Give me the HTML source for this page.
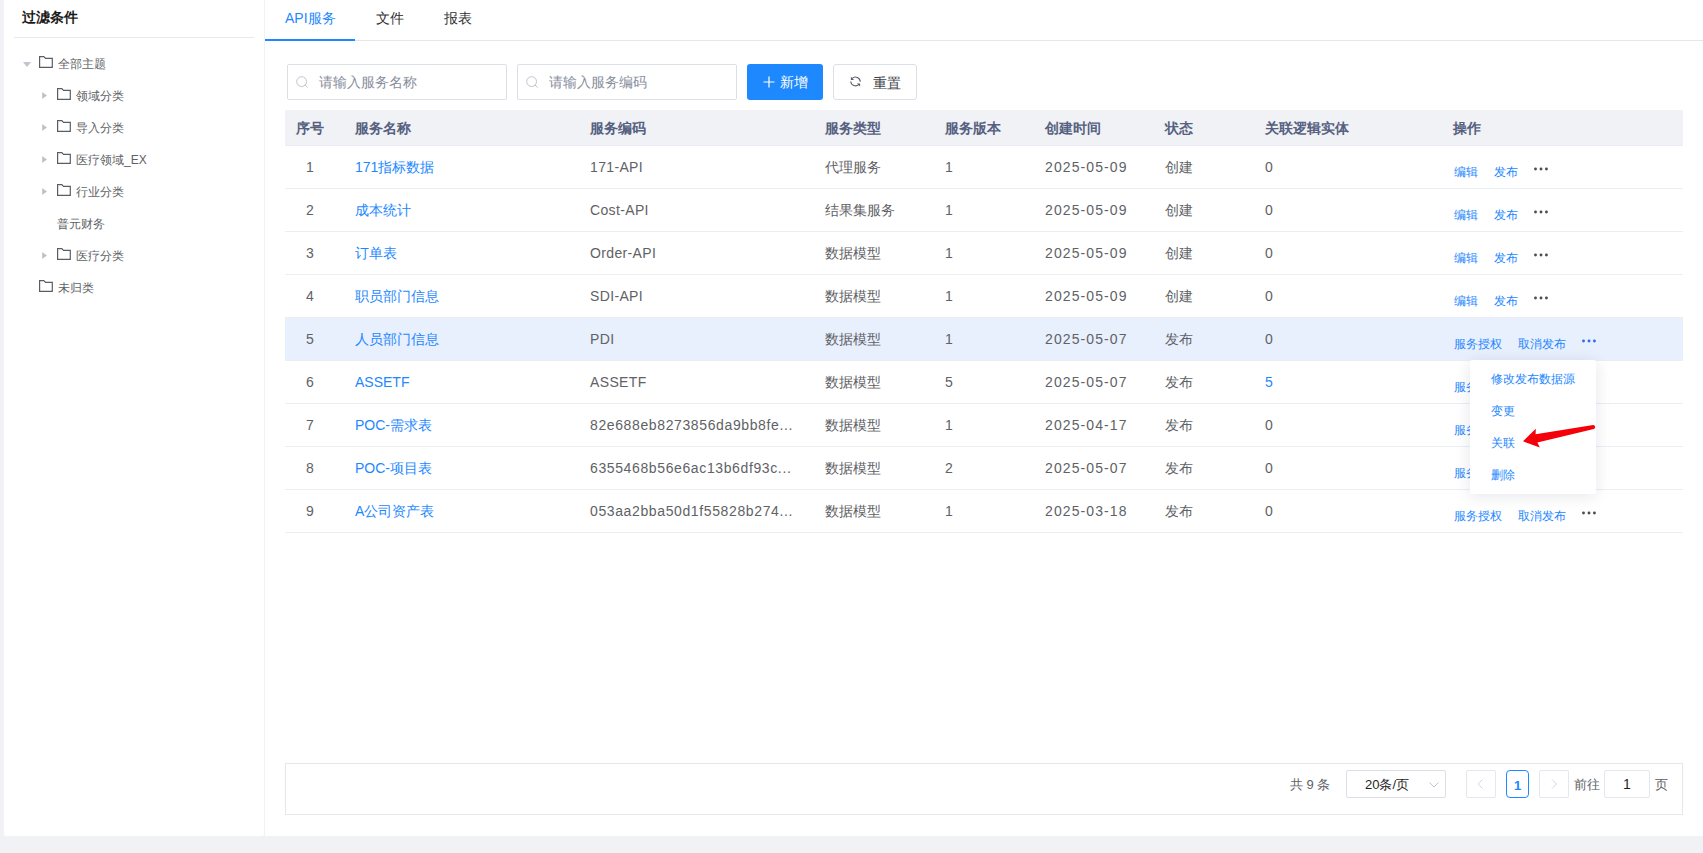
<!DOCTYPE html>
<html><head><meta charset="utf-8">
<style>
*{box-sizing:border-box;margin:0;padding:0}
html,body{width:1703px;height:853px;overflow:hidden;background:#f0f2f5;font-family:"Liberation Sans",sans-serif;}
#left{position:absolute;left:4px;top:0;width:260px;height:836px;background:#fff;border-radius:0 0 2px 2px}
#right{position:absolute;left:265px;top:0;width:1438px;height:836px;background:#fff}
.t{position:absolute;white-space:nowrap;line-height:1}
.ttl{left:18px;top:10px;font-size:14px;font-weight:bold;color:#1a1a1a;line-height:14px}
.sep{position:absolute;left:10px;top:37px;width:240px;height:1px;background:#e6e9f0}
.nt{position:absolute;font-size:12px;line-height:14px;color:#606266;white-space:nowrap}
.fold{position:absolute}
.arr-d{position:absolute;width:0;height:0;border-left:4px solid transparent;border-right:4px solid transparent;border-top:5px solid #bfc4cf}
.arr-r{position:absolute;width:0;height:0;border-top:3.5px solid transparent;border-bottom:3.5px solid transparent;border-left:5px solid #bfc4cf}
.tabs{position:absolute;left:0;top:0;width:1438px;height:41px;border-bottom:1px solid #e4e7ed}
.tab{position:absolute;top:11px;font-size:14px;line-height:14px;color:#303133;white-space:nowrap}
.tab.act{color:#1e88ff}
.tabline{position:absolute;left:0;top:39px;width:90px;height:2px;background:#1e88ff}
.inp{position:absolute;top:64px;width:220px;height:36px;border:1px solid #dcdfe6;border-radius:2px;background:#fff}
.inp .ph{position:absolute;left:30.5px;top:10px;font-size:14px;line-height:14px;color:#878e9c;white-space:nowrap}
.inp svg{position:absolute;left:8px;top:11px}
.btn{position:absolute;top:64px;height:36px;border-radius:3px;font-size:14px;white-space:nowrap}
.btn .bt{position:absolute;top:11px;line-height:14px}
.btn-p{left:482px;width:76px;background:#1e88ff;color:#fff}
.btn-d{left:568px;width:84px;border:1px solid #dcdfe6;background:#fff;color:#404348}
.thead{position:absolute;left:20px;top:110px;width:1398px;height:36px;background:#f0f2f5;border-bottom:1px solid #e8ebf3}
.th{position:absolute;top:11px;font-size:14px;line-height:14px;color:#566080;font-weight:bold;white-space:nowrap}
.row{position:absolute;left:20px;width:1398px;height:43px;border-bottom:1px solid #ebeef5}
.row.hov{background:#e8effd}
.td{position:absolute;top:14px;font-size:14px;line-height:14px;color:#606266;white-space:nowrap}
.td.lk{color:#1e88ff}
.op{position:absolute;top:20px;font-size:12px;line-height:12px;color:#1e88ff;white-space:nowrap}
.dots{position:absolute;top:21px}
.dots i{position:absolute;top:0;width:3px;height:3px;border-radius:50%;background:#3a3a3a}
.dots.b i{background:#1e6bff}
.dd{position:absolute;left:1205px;top:360px;width:126px;height:134px;background:#fff;border-radius:2px;box-shadow:0 2px 16px rgba(20,30,60,0.11)}
.dd .it{position:absolute;left:21px;font-size:12px;line-height:12px;color:#1e88ff;white-space:nowrap}
.pager{position:absolute;left:20px;top:763px;width:1398px;height:52px;border:1px solid #e4e7ed}
.pg{position:absolute;font-size:13px;line-height:13px;white-space:nowrap}
.pbox{position:absolute;top:6px;height:28px;border:1px solid #e4e7ed;border-radius:2px;background:#fff}
.pbox.cur{border-color:#1e88ff;border-radius:4px}

</style></head><body>
<div id="left">
<div class="t ttl">过滤条件</div>
<div class="sep"></div>
<div class="arr-d" style="left:19px;top:62px"></div>
<svg class="fold" style="left:35px;top:56px" width="15" height="13" viewBox="0 0 15 13"><path d="M0.6 0.6H4.8L6.5 2.4H13.3V11.3H0.6Z" fill="none" stroke="#585c64" stroke-width="1.2" stroke-linejoin="miter"/></svg>
<div class="nt" style="left:54px;top:57px">全部主题</div>
<svg class="fold" style="left:38px;top:92px" width="6" height="8" viewBox="0 0 6 8"><path d="M0.2 0L5 3.5L0.2 7Z" fill="#bcc1cc"/></svg>
<svg class="fold" style="left:53px;top:88px" width="15" height="13" viewBox="0 0 15 13"><path d="M0.6 0.6H4.8L6.5 2.4H13.3V11.3H0.6Z" fill="none" stroke="#585c64" stroke-width="1.2" stroke-linejoin="miter"/></svg>
<div class="nt" style="left:72px;top:89px">领域分类</div>
<svg class="fold" style="left:38px;top:124px" width="6" height="8" viewBox="0 0 6 8"><path d="M0.2 0L5 3.5L0.2 7Z" fill="#bcc1cc"/></svg>
<svg class="fold" style="left:53px;top:120px" width="15" height="13" viewBox="0 0 15 13"><path d="M0.6 0.6H4.8L6.5 2.4H13.3V11.3H0.6Z" fill="none" stroke="#585c64" stroke-width="1.2" stroke-linejoin="miter"/></svg>
<div class="nt" style="left:72px;top:121px">导入分类</div>
<svg class="fold" style="left:38px;top:156px" width="6" height="8" viewBox="0 0 6 8"><path d="M0.2 0L5 3.5L0.2 7Z" fill="#bcc1cc"/></svg>
<svg class="fold" style="left:53px;top:152px" width="15" height="13" viewBox="0 0 15 13"><path d="M0.6 0.6H4.8L6.5 2.4H13.3V11.3H0.6Z" fill="none" stroke="#585c64" stroke-width="1.2" stroke-linejoin="miter"/></svg>
<div class="nt" style="left:72px;top:153px">医疗领域_EX</div>
<svg class="fold" style="left:38px;top:188px" width="6" height="8" viewBox="0 0 6 8"><path d="M0.2 0L5 3.5L0.2 7Z" fill="#bcc1cc"/></svg>
<svg class="fold" style="left:53px;top:184px" width="15" height="13" viewBox="0 0 15 13"><path d="M0.6 0.6H4.8L6.5 2.4H13.3V11.3H0.6Z" fill="none" stroke="#585c64" stroke-width="1.2" stroke-linejoin="miter"/></svg>
<div class="nt" style="left:72px;top:185px">行业分类</div>
<div class="nt" style="left:53px;top:217px">普元财务</div>
<svg class="fold" style="left:38px;top:252px" width="6" height="8" viewBox="0 0 6 8"><path d="M0.2 0L5 3.5L0.2 7Z" fill="#bcc1cc"/></svg>
<svg class="fold" style="left:53px;top:248px" width="15" height="13" viewBox="0 0 15 13"><path d="M0.6 0.6H4.8L6.5 2.4H13.3V11.3H0.6Z" fill="none" stroke="#585c64" stroke-width="1.2" stroke-linejoin="miter"/></svg>
<div class="nt" style="left:72px;top:249px">医疗分类</div>
<svg class="fold" style="left:35px;top:280px" width="15" height="13" viewBox="0 0 15 13"><path d="M0.6 0.6H4.8L6.5 2.4H13.3V11.3H0.6Z" fill="none" stroke="#585c64" stroke-width="1.2" stroke-linejoin="miter"/></svg>
<div class="nt" style="left:54px;top:281px">未归类</div>
</div>
<div id="right">
<div class="tabs">
    <div class="tab act" style="left:20px">API服务</div>
    <div class="tab" style="left:111px">文件</div>
    <div class="tab" style="left:179px">报表</div>
    <div class="tabline"></div>
  </div>
<div class="inp" style="left:22px"><svg width="13" height="13" viewBox="0 0 13 13"><circle cx="5.6" cy="5.6" r="4.9" fill="none" stroke="#c0c4cc" stroke-width="1"/><path d="M9.2 9.2L11.6 11.6" stroke="#c0c4cc" stroke-width="1"/></svg><div class="ph">请输入服务名称</div></div>
<div class="inp" style="left:252px"><svg width="13" height="13" viewBox="0 0 13 13"><circle cx="5.6" cy="5.6" r="4.9" fill="none" stroke="#c0c4cc" stroke-width="1"/><path d="M9.2 9.2L11.6 11.6" stroke="#c0c4cc" stroke-width="1"/></svg><div class="ph">请输入服务编码</div></div>
<div class="btn btn-p"><svg style="position:absolute;left:16px;top:12px" width="12" height="12" viewBox="0 0 12 12"><path d="M6 0.5V11.5M0.5 6H11.5" stroke="#fff" stroke-width="1.2"/></svg><span class="bt" style="left:33px">新增</span></div>
<div class="btn btn-d"><svg style="position:absolute;left:15px;top:10px" width="13" height="13" viewBox="0 0 13 13"><path d="M3.2 3.4A4.8 4.8 0 0 1 11.3 6.6" fill="none" stroke="#5a5d63" stroke-width="1.1"/><path d="M1.7 6.5A4.8 4.8 0 0 0 9.9 9.4" fill="none" stroke="#5a5d63" stroke-width="1.1"/><path d="M1.9 1.8V4.9H5Z" fill="#5a5d63"/><path d="M8 8.5H11.1V11.6Z" fill="#5a5d63"/></svg><span class="bt" style="left:39px">重置</span></div>
<div class="thead"><div class="th" style="left:11px">序号</div><div class="th" style="left:70px">服务名称</div><div class="th" style="left:305px">服务编码</div><div class="th" style="left:540px">服务类型</div><div class="th" style="left:660px">服务版本</div><div class="th" style="left:760px">创建时间</div><div class="th" style="left:880px">状态</div><div class="th" style="left:980px">关联逻辑实体</div><div class="th" style="left:1168px">操作</div></div>
<div class="row" style="top:146px"><div class="td num" style="left:0;width:50px;text-align:center">1</div><div class="td lk" style="left:70px">171指标数据</div><div class="td" style="left:305px;letter-spacing:0.35px;">171-API</div><div class="td" style="left:540px">代理服务</div><div class="td" style="left:660px">1</div><div class="td" style="left:760px;letter-spacing:1.1px">2025-05-09</div><div class="td" style="left:880px">创建</div><div class="td" style="left:980px">0</div><div class="op" style="left:1169px">编辑</div><div class="op" style="left:1209px">发布</div><svg class="dots" style="left:1249px" width="15" height="4" viewBox="0 0 15 4"><circle cx="1.5" cy="2" r="1.45" fill="#4d4d4d"/><circle cx="7" cy="2" r="1.45" fill="#4d4d4d"/><circle cx="12.4" cy="2" r="1.45" fill="#4d4d4d"/></svg></div>
<div class="row" style="top:189px"><div class="td num" style="left:0;width:50px;text-align:center">2</div><div class="td lk" style="left:70px">成本统计</div><div class="td" style="left:305px;letter-spacing:0.35px;">Cost-API</div><div class="td" style="left:540px">结果集服务</div><div class="td" style="left:660px">1</div><div class="td" style="left:760px;letter-spacing:1.1px">2025-05-09</div><div class="td" style="left:880px">创建</div><div class="td" style="left:980px">0</div><div class="op" style="left:1169px">编辑</div><div class="op" style="left:1209px">发布</div><svg class="dots" style="left:1249px" width="15" height="4" viewBox="0 0 15 4"><circle cx="1.5" cy="2" r="1.45" fill="#4d4d4d"/><circle cx="7" cy="2" r="1.45" fill="#4d4d4d"/><circle cx="12.4" cy="2" r="1.45" fill="#4d4d4d"/></svg></div>
<div class="row" style="top:232px"><div class="td num" style="left:0;width:50px;text-align:center">3</div><div class="td lk" style="left:70px">订单表</div><div class="td" style="left:305px;letter-spacing:0.35px;">Order-API</div><div class="td" style="left:540px">数据模型</div><div class="td" style="left:660px">1</div><div class="td" style="left:760px;letter-spacing:1.1px">2025-05-09</div><div class="td" style="left:880px">创建</div><div class="td" style="left:980px">0</div><div class="op" style="left:1169px">编辑</div><div class="op" style="left:1209px">发布</div><svg class="dots" style="left:1249px" width="15" height="4" viewBox="0 0 15 4"><circle cx="1.5" cy="2" r="1.45" fill="#4d4d4d"/><circle cx="7" cy="2" r="1.45" fill="#4d4d4d"/><circle cx="12.4" cy="2" r="1.45" fill="#4d4d4d"/></svg></div>
<div class="row" style="top:275px"><div class="td num" style="left:0;width:50px;text-align:center">4</div><div class="td lk" style="left:70px">职员部门信息</div><div class="td" style="left:305px;letter-spacing:0.35px;">SDI-API</div><div class="td" style="left:540px">数据模型</div><div class="td" style="left:660px">1</div><div class="td" style="left:760px;letter-spacing:1.1px">2025-05-09</div><div class="td" style="left:880px">创建</div><div class="td" style="left:980px">0</div><div class="op" style="left:1169px">编辑</div><div class="op" style="left:1209px">发布</div><svg class="dots" style="left:1249px" width="15" height="4" viewBox="0 0 15 4"><circle cx="1.5" cy="2" r="1.45" fill="#4d4d4d"/><circle cx="7" cy="2" r="1.45" fill="#4d4d4d"/><circle cx="12.4" cy="2" r="1.45" fill="#4d4d4d"/></svg></div>
<div class="row hov" style="top:318px"><div class="td num" style="left:0;width:50px;text-align:center">5</div><div class="td lk" style="left:70px">人员部门信息</div><div class="td" style="left:305px;letter-spacing:0.35px;">PDI</div><div class="td" style="left:540px">数据模型</div><div class="td" style="left:660px">1</div><div class="td" style="left:760px;letter-spacing:1.1px">2025-05-07</div><div class="td" style="left:880px">发布</div><div class="td" style="left:980px">0</div><div class="op" style="left:1169px">服务授权</div><div class="op" style="left:1233px">取消发布</div><svg class="dots" style="left:1297px" width="15" height="4" viewBox="0 0 15 4"><circle cx="1.5" cy="2" r="1.45" fill="#2a6cf6"/><circle cx="7" cy="2" r="1.45" fill="#2a6cf6"/><circle cx="12.4" cy="2" r="1.45" fill="#2a6cf6"/></svg></div>
<div class="row" style="top:361px"><div class="td num" style="left:0;width:50px;text-align:center">6</div><div class="td lk" style="left:70px">ASSETF</div><div class="td" style="left:305px;letter-spacing:0.35px;">ASSETF</div><div class="td" style="left:540px">数据模型</div><div class="td" style="left:660px">5</div><div class="td" style="left:760px;letter-spacing:1.1px">2025-05-07</div><div class="td" style="left:880px">发布</div><div class="td lk" style="left:980px">5</div><div class="op" style="left:1169px">服务授权</div><div class="op" style="left:1233px">取消发布</div><svg class="dots" style="left:1297px" width="15" height="4" viewBox="0 0 15 4"><circle cx="1.5" cy="2" r="1.45" fill="#4d4d4d"/><circle cx="7" cy="2" r="1.45" fill="#4d4d4d"/><circle cx="12.4" cy="2" r="1.45" fill="#4d4d4d"/></svg></div>
<div class="row" style="top:404px"><div class="td num" style="left:0;width:50px;text-align:center">7</div><div class="td lk" style="left:70px">POC-需求表</div><div class="td" style="left:305px;letter-spacing:0.62px;">82e688eb8273856da9bb8fe...</div><div class="td" style="left:540px">数据模型</div><div class="td" style="left:660px">1</div><div class="td" style="left:760px;letter-spacing:1.1px">2025-04-17</div><div class="td" style="left:880px">发布</div><div class="td" style="left:980px">0</div><div class="op" style="left:1169px">服务授权</div><div class="op" style="left:1233px">取消发布</div><svg class="dots" style="left:1297px" width="15" height="4" viewBox="0 0 15 4"><circle cx="1.5" cy="2" r="1.45" fill="#4d4d4d"/><circle cx="7" cy="2" r="1.45" fill="#4d4d4d"/><circle cx="12.4" cy="2" r="1.45" fill="#4d4d4d"/></svg></div>
<div class="row" style="top:447px"><div class="td num" style="left:0;width:50px;text-align:center">8</div><div class="td lk" style="left:70px">POC-项目表</div><div class="td" style="left:305px;letter-spacing:0.62px;">6355468b56e6ac13b6df93c...</div><div class="td" style="left:540px">数据模型</div><div class="td" style="left:660px">2</div><div class="td" style="left:760px;letter-spacing:1.1px">2025-05-07</div><div class="td" style="left:880px">发布</div><div class="td" style="left:980px">0</div><div class="op" style="left:1169px">服务授权</div><div class="op" style="left:1233px">取消发布</div><svg class="dots" style="left:1297px" width="15" height="4" viewBox="0 0 15 4"><circle cx="1.5" cy="2" r="1.45" fill="#4d4d4d"/><circle cx="7" cy="2" r="1.45" fill="#4d4d4d"/><circle cx="12.4" cy="2" r="1.45" fill="#4d4d4d"/></svg></div>
<div class="row" style="top:490px"><div class="td num" style="left:0;width:50px;text-align:center">9</div><div class="td lk" style="left:70px">A公司资产表</div><div class="td" style="left:305px;letter-spacing:0.62px;">053aa2bba50d1f55828b274...</div><div class="td" style="left:540px">数据模型</div><div class="td" style="left:660px">1</div><div class="td" style="left:760px;letter-spacing:1.1px">2025-03-18</div><div class="td" style="left:880px">发布</div><div class="td" style="left:980px">0</div><div class="op" style="left:1169px">服务授权</div><div class="op" style="left:1233px">取消发布</div><svg class="dots" style="left:1297px" width="15" height="4" viewBox="0 0 15 4"><circle cx="1.5" cy="2" r="1.45" fill="#4d4d4d"/><circle cx="7" cy="2" r="1.45" fill="#4d4d4d"/><circle cx="12.4" cy="2" r="1.45" fill="#4d4d4d"/></svg></div>
<div class="dd"><div class="it" style="top:13px">修改发布数据源</div><div class="it" style="top:45px">变更</div><div class="it" style="top:77px">关联</div><div class="it" style="top:109px">删除</div></div>
<svg style="position:absolute;left:1255px;top:422px" width="80" height="30" viewBox="0 0 80 30"><path d="M3 19.3 L15.8 6.8 L15.6 12.3 L73.2 3.1 A1.95 1.95 0 0 1 73.8 6.9 L17.4 20.6 L19.8 25.6 Z" fill="#f5000a"/></svg>
<div class="pager"><div class="pg" style="left:1004px;top:14px;color:#606266">共 9 条</div><div class="pbox" style="left:1060px;width:100px;border-color:#dcdfe6"><div class="pg" style="left:18px;top:7px;color:#1f1f1f">20条/页</div><svg style="position:absolute;left:82px;top:11px" width="10" height="6" viewBox="0 0 10 6"><path d="M0.5 0.5L5 5L9.5 0.5" fill="none" stroke="#c0c4cc" stroke-width="1"/></svg></div><div class="pbox" style="left:1180px;width:30px"><svg style="position:absolute;left:10px;top:8px" width="7" height="10" viewBox="0 0 7 10"><path d="M5.5 0.5L1 5L5.5 9.5" fill="none" stroke="#d3d6dd" stroke-width="1"/></svg></div><div class="pbox cur" style="left:1220px;width:23px"><div class="pg" style="left:0;width:21px;text-align:center;top:8px;color:#1e88ff;font-weight:bold">1</div></div><div class="pbox" style="left:1253px;width:30px"><svg style="position:absolute;left:11px;top:8px" width="7" height="10" viewBox="0 0 7 10"><path d="M1 0.5L5.5 5L1 9.5" fill="none" stroke="#d3d6dd" stroke-width="1"/></svg></div><div class="pg" style="left:1288px;top:14px;color:#606266">前往</div><div class="pbox" style="left:1318px;width:46px"><div class="pg" style="left:0;width:44px;text-align:center;top:7px;color:#1f1f1f;font-size:14px">1</div></div><div class="pg" style="left:1369px;top:14px;color:#606266">页</div></div>
</div>
</body></html>
